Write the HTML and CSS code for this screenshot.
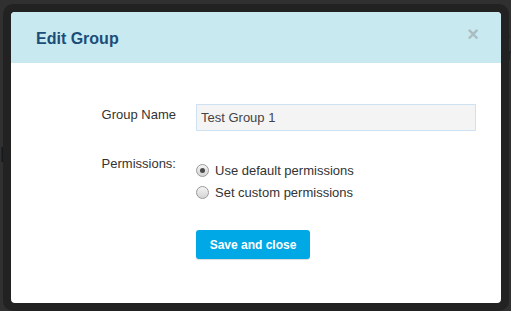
FILE: index.html
```html
<!DOCTYPE html>
<html lang="en">
<head>
  <meta charset="UTF-8" />
  <meta name="viewport" content="width=device-width, initial-scale=1.0" />
  <title>Edit Group</title>
  <link rel="stylesheet" href="styles.css">
</head>
<body>

<div class="backdrop">
  <span class="ghost ghost-s">s</span>
  <span class="ghost ghost-m">m</span>
  <span class="ghost ghost-p">p</span>

  <div class="frame">
    <div class="modal">
      <div class="modal-header">
        <h1>Edit Group</h1>
        <span class="close">&times;</span>
      </div>

      <div class="modal-body">
        <div class="form-row row-name">
          <label class="label" for="group-name">Group Name</label>
          <input id="group-name" class="text-input" type="text" value="Test Group 1" />
        </div>

        <div class="form-row row-perm">
          <span class="label label-perm">Permissions:</span>
          <div class="radios">
            <label class="radio"><input type="radio" name="perm" checked /> Use default permissions</label>
            <label class="radio"><input type="radio" name="perm" /> Set custom permissions</label>
          </div>
        </div>

        <div class="form-row">
          <span></span>
          <div><button class="save-button">Save and close</button></div>
        </div>
      </div>
    </div>
  </div>
</div>

</body>
</html>
```

FILE: styles.css
```css
* {
  box-sizing: border-box;
}

body {
  margin: 0;
  padding: 0;
  background: #303030;
  font-family: 'Liberation Sans', Arial, sans-serif;
  color: #333;
  overflow: hidden;
}

.backdrop {
  position: relative;
  width: 511px;
  height: 311px;
  padding: 4px 2px 0 3px;
}

.ghost {
  position: absolute;
  color: #151a20;
  font-size: 20px;
  font-weight: bold;
}

.ghost-s {
  left: 499px;
  top: 22px;
}

.ghost-m {
  left: 502px;
  top: 46px;
  font-weight: normal;
  font-size: 16px;
}

.ghost-p {
  left: 0;
  top: 140px;
}

.frame {
  position: relative;
  width: 506px;
  height: 307px;
  padding: 8px 8px 7px 8px;
  background: #222;
  border-radius: 10px;
}

.modal {
  background: white;
  border-radius: 4px;
  overflow: hidden;
  height: 291px;
}

.modal-header {
  height: 51px;
  background: #c9e9f0;
  display: flex;
  align-items: center;
  justify-content: space-between;
  padding: 0 22px 0 25px;
}

.modal-header h1 {
  margin: 0;
  font-family: 'Liberation Sans', Arial, sans-serif;
  font-size: 16px;
  font-weight: bold;
  color: #1b4d78;
  padding-top: 2px;
}

.close {
  color: #a9bcc2;
  font-size: 20px;
  font-weight: bold;
  line-height: 1;
  margin-top: -8px;
}

.modal-body {
  padding: 41px 25px 0 25px;
}

.form-row {
  display: grid;
  grid-template-columns: 140px 280px;
  column-gap: 20px;
}

.row-name {
  margin-bottom: 27px;
}

.row-perm {
  margin-bottom: 30px;
}

.label {
  text-align: right;
  font-size: 13px;
  color: #333;
  padding-top: 3px;
}

.label-perm {
  padding-top: 0;
  margin-top: -2px;
}

.text-input {
  width: 280px;
  height: 27px;
  border: 1px solid #cfe2f3;
  background: #f4f4f4;
  font-family: 'Liberation Sans', Arial, sans-serif;
  font-size: 13px;
  color: #444;
  padding: 0 4px;
  outline: none;
}

.radios {
  display: flex;
  flex-direction: column;
  gap: 6px;
  padding-top: 4px;
}

.radio {
  display: flex;
  align-items: center;
  gap: 6px;
  font-size: 13px;
  color: #333;
  height: 16px;
}

.radio input {
  appearance: none;
  -webkit-appearance: none;
  margin: 0;
  width: 13px;
  height: 13px;
  border-radius: 50%;
  border: 1px solid #9a9a9a;
  background: linear-gradient(#f4f4f4, #d4d4d4);
  position: relative;
}

.radio input:checked::after {
  content: "";
  position: absolute;
  left: 3px;
  top: 3px;
  width: 5px;
  height: 5px;
  border-radius: 50%;
  background: #4a4a4a;
}

.save-button {
  width: 114px;
  height: 29px;
  background: #00a9e6;
  color: white;
  border: none;
  border-radius: 3px;
  font-family: 'Liberation Sans', Arial, sans-serif;
  font-size: 12px;
  font-weight: bold;
  cursor: pointer;
  box-shadow: 0 1px 1px rgba(0,0,0,0.15);
}
```
